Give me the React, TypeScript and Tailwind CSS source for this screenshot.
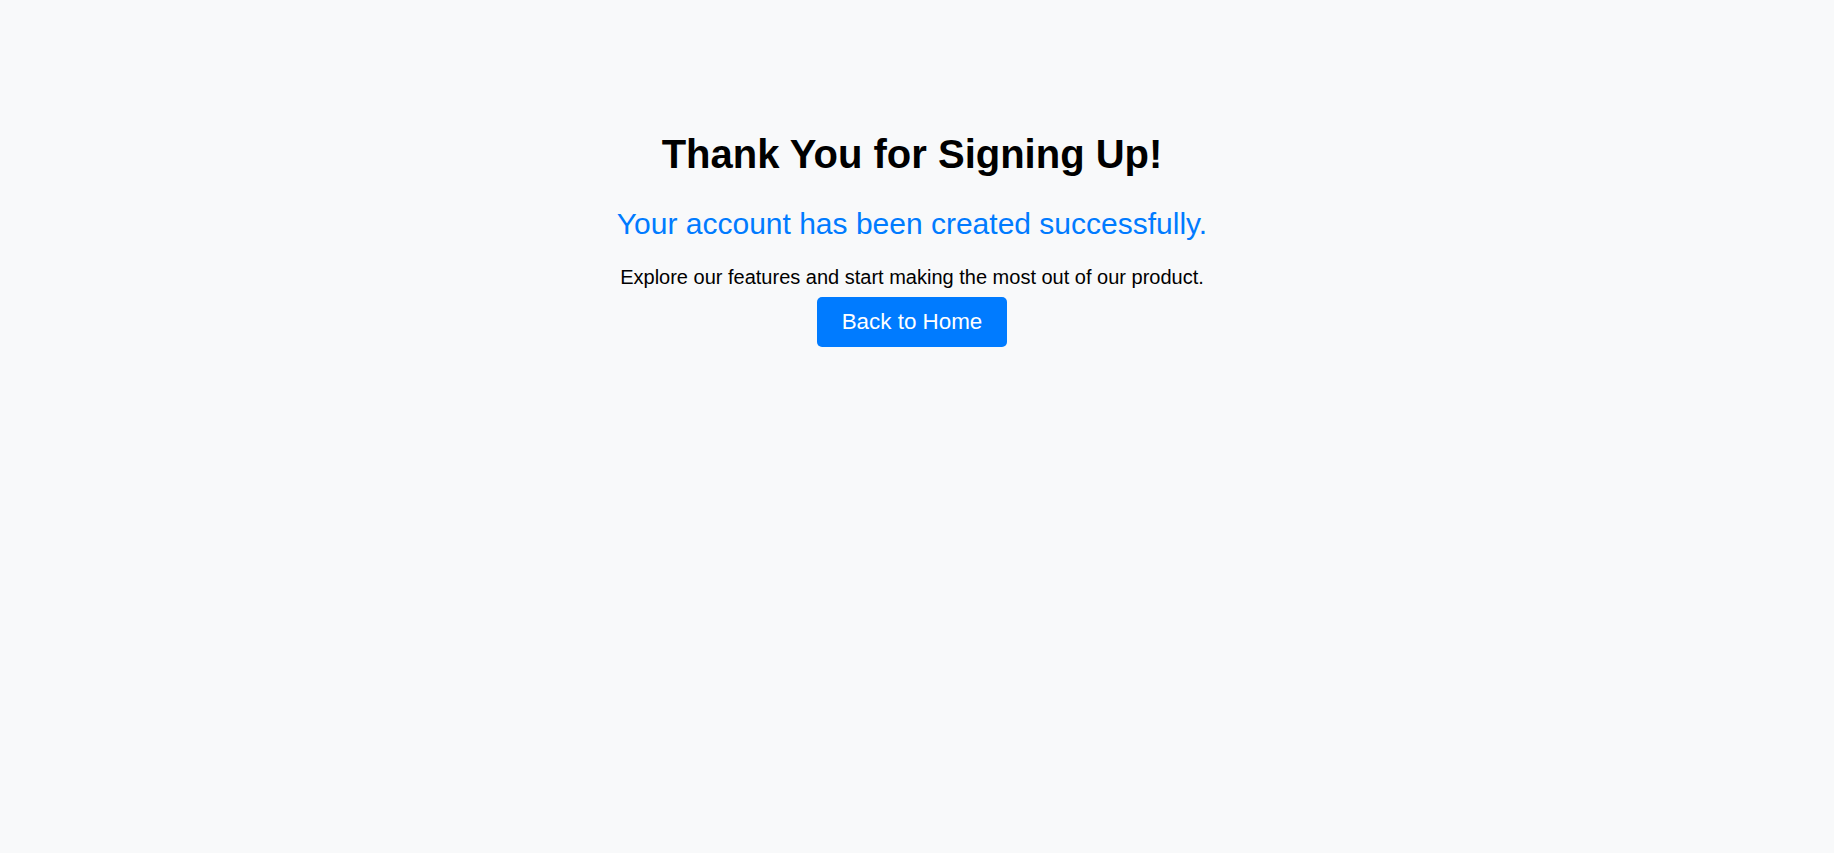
const App = () => {
  return (
    <div className="min-h-screen bg-[#f8f9fa] font-['Liberation_Sans',Arial,sans-serif] pr-[10px]">
      <div className="flex flex-col items-center text-center pt-[131px]">
        <h1 className="text-[40px] leading-[46px] font-bold text-black">
          Thank You for Signing Up!
        </h1>
        <h2 className="mt-[30px] text-[30px] leading-[34.5px] text-[#007bff]">
          Your account has been created successfully.
        </h2>
        <p className="mt-[24px] text-[20px] leading-[23px] text-black">
          Explore our features and start making the most out of our product.
        </p>
        <a
          href="#"
          className="mt-[8px] inline-block bg-[#007bff] text-white text-[22.4px] leading-[26px] px-[25px] py-[12px] rounded-[5px]"
        >
          Back to Home
        </a>
      </div>
    </div>
  );
};

export default App;
